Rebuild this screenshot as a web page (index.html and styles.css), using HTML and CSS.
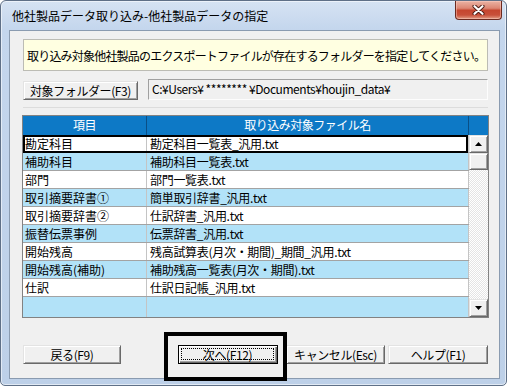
FILE: index.html
```html
<!DOCTYPE html>
<html lang="ja">
<head>
<meta charset="utf-8">
<title>他社製品データの指定</title>
<link rel="stylesheet" href="styles.css">
</head>
<body>
<div class="window">
  <div class="titlebar">
    <span class="title">他社製品データ取り込み-他社製品データの指定</span>
    <div class="close">
      <svg width="13" height="10" viewBox="0 0 13 10"><path d="M2.5 1.2 L10.5 8.8 M10.5 1.2 L2.5 8.8" stroke="#4a1a12" stroke-width="4" stroke-linecap="round"/><path d="M2.5 1.2 L10.5 8.8 M10.5 1.2 L2.5 8.8" stroke="#fff" stroke-width="2.2" stroke-linecap="round"/></svg>
    </div>
  </div>
  <div class="client">
    <div class="message">取り込み対象他社製品のエクスポートファイルが存在するフォルダーを指定してください。</div>
    <div class="folder-row">
      <button class="btn folder-btn">対象フォルダー(F3)</button>
      <div class="path">C:¥Users¥ ******** ¥Documents¥houjin_data¥</div>
    </div>
    <div class="sep"></div>
    <div class="grid">
      <div class="grid-head">
        <div class="hcell h1">項目</div>
        <div class="hcell h2">取り込み対象ファイル名</div>
        <div class="hcell h3"></div>
      </div>
      <div class="grid-body">
        <div class="rows">
          <div class="row sel"><div class="c1">勘定科目</div><div class="c2">勘定科目一覧表_汎用.txt</div></div>
          <div class="row alt"><div class="c1">補助科目</div><div class="c2">補助科目一覧表.txt</div></div>
          <div class="row"><div class="c1">部門</div><div class="c2">部門一覧表.txt</div></div>
          <div class="row alt"><div class="c1">取引摘要辞書①</div><div class="c2">簡単取引辞書_汎用.txt</div></div>
          <div class="row"><div class="c1">取引摘要辞書②</div><div class="c2">仕訳辞書_汎用.txt</div></div>
          <div class="row alt"><div class="c1">振替伝票事例</div><div class="c2">伝票辞書_汎用.txt</div></div>
          <div class="row"><div class="c1">開始残高</div><div class="c2">残高試算表(月次・期間)_期間_汎用.txt</div></div>
          <div class="row alt"><div class="c1">開始残高(補助)</div><div class="c2">補助残高一覧表(月次・期間).txt</div></div>
          <div class="row"><div class="c1">仕訳</div><div class="c2">仕訳日記帳_汎用.txt</div></div>
          <div class="row alt last"><div class="c1"></div><div class="c2"></div></div>
        </div>
        <div class="scrollbar">
          <div class="sb-btn"><svg width="7" height="4" viewBox="0 0 7 4"><path d="M3.5 0 L7 4 L0 4Z" fill="#000"/></svg></div>
          <div class="sb-thumb"></div>
          <div class="sb-track"></div>
          <div class="sb-btn"><svg width="7" height="4" viewBox="0 0 7 4"><path d="M0 0 L7 0 L3.5 4Z" fill="#000"/></svg></div>
        </div>
      </div>
    </div>
    <div class="buttons">
      <button class="btn back">戻る(F9)</button>
      <button class="btn next"><span class="focus">次へ(F12)</span></button>
      <button class="btn cancel">キャンセル(Esc)</button>
      <button class="btn help">ヘルプ(F1)</button>
    </div>
  </div>
  <div class="highlight"></div>
</div>
</body>
</html>
```

FILE: styles.css
```css
* { box-sizing: border-box; }

body {
  margin: 0;
  background: #fff;
  font-family: "Noto Sans CJK JP", "Noto Sans", sans-serif;
  font-size: 12px;
  color: #000;
}

.window {
  position: relative;
  width: 507px;
  height: 386px;
  border: 1px solid #5f7087;
  border-radius: 6px 6px 5px 5px;
  background: linear-gradient(#d6e3f3, #c4d6ed 28px, #bdd0e8);
  box-shadow: inset 0 0 0 1px rgba(255, 255, 255, 0.55);
  padding: 0 6px 6px 8px;
  display: flex;
  flex-direction: column;
}

.titlebar {
  height: 29px;
  display: flex;
  justify-content: space-between;
  align-items: flex-start;
}

.title {
  padding: 7px 0 0 3px;
  font-size: 12px;
  line-height: 16px;
  color: #000;
}

.close {
  width: 47px;
  height: 19px;
  margin-right: -2px;
  border: 1px solid #6b2a20;
  border-top: none;
  border-radius: 0 0 4px 4px;
  background: linear-gradient(#eab3a4 0%, #dc8673 40%, #c5462f 52%, #c8503a 78%, #e29d85 100%);
  box-shadow: inset 0 0 0 1px rgba(255, 210, 200, 0.45);
  display: flex;
  align-items: center;
  justify-content: center;
}

.client {
  flex: 1;
  background: #f0f0f0;
  border: 1px solid #8a9bb0;
  padding: 8px 11px 0 13px;
  display: flex;
  flex-direction: column;
}

.message {
  height: 32px;
  background: #ffffe1;
  border: 1px solid #bcbcb4;
  padding-left: 3px;
  display: flex;
  align-items: center;
  letter-spacing: -0.8px;
  white-space: nowrap;
}

.folder-row {
  display: flex;
  align-items: flex-end;
  height: 21px;
  margin-top: 8px;
}

.btn {
  font: inherit;
  color: #000;
  background: #f0f0f0;
  border: 1px solid;
  border-color: #e3e3e3 #696969 #696969 #e3e3e3;
  box-shadow: inset 1px 1px #fff, inset -1px -1px #a0a0a0;
  padding: 0;
  height: 19px;
  line-height: 16px;
  letter-spacing: -0.4px;
  white-space: nowrap;
}

.folder-btn { width: 115px; }

.path {
  flex: 1;
  margin-left: 10px;
  height: 21px;
  border: 1px solid;
  border-color: #a0a0a0 #fdfdfd #fdfdfd #a0a0a0;
  background: #f0f0f0;
  padding-left: 3px;
  line-height: 18px;
  letter-spacing: -0.45px;
  white-space: nowrap;
}

.sep {
  height: 1px;
  background: #dcdcdc;
  margin-top: 7px;
}

.grid {
  margin: 7px -1px 0;
  border: 1px solid #828282;
  background: #fff;
}

.grid-head {
  display: flex;
  height: 19px;
  background: #0d79c6;
  color: #fff;
}

.hcell {
  line-height: 18px;
  text-align: center;
  letter-spacing: -0.5px;
}

.h1 { width: 124px; border-right: 1px solid #0a4f86; }
.h2 { width: 322px; border-right: 1px solid #0a4f86; }
.h3 { flex: 1; }

.grid-body {
  display: flex;
  height: 182px;
}

.rows {
  width: 446px;
  display: flex;
  flex-direction: column;
}

.row {
  display: flex;
  height: 18px;
  border-bottom: 1px solid #a3a3a3;
  background: #fff;
  white-space: nowrap;
}

.row.alt { background: #b2e2f8; }

.row.last {
  flex: 1;
  border-bottom: none;
}

.row.sel { position: relative; }

.row.sel::after {
  content: "";
  position: absolute;
  top: 0;
  left: 0;
  right: 1px;
  bottom: -1px;
  border: 2px solid #000;
}

.c1 {
  width: 124px;
  border-right: 1px solid #c4c4c4;
  padding-left: 2px;
  line-height: 17px;
}

.c2 {
  width: 322px;
  border-right: 1px solid #c4c4c4;
  padding-left: 3px;
  line-height: 17px;
  letter-spacing: -0.3px;
}

.scrollbar {
  flex: 1;
  display: flex;
  flex-direction: column;
}

.sb-btn, .sb-thumb {
  height: 18px;
  background: #f0f0f0;
  border: 1px solid;
  border-color: #e3e3e3 #696969 #696969 #e3e3e3;
  box-shadow: inset 1px 1px #fff, inset -1px -1px #a0a0a0;
  display: flex;
  align-items: center;
  justify-content: center;
}

.sb-thumb { height: 17px; }

.sb-track {
  flex: 1;
  background: repeating-conic-gradient(#ffffff 0 25%, #e4e4e4 0 50%) 0 0 / 2px 2px;
}

.buttons {
  display: flex;
  margin-top: 27px;
}

.back { width: 98px; }

.next {
  width: 100px;
  margin-left: auto;
  border-color: #000;
  box-shadow: inset 1px 1px #fff, inset -1px -1px #696969, inset -2px -2px #a0a0a0;
  padding: 2px 3px 3px 2px;
  display: flex;
}

.focus {
  flex: 1;
  border: 1px dotted #000;
  line-height: 11px;
}

.cancel { width: 99px; margin-left: 8px; }
.help { width: 100px; margin-left: 3px; }

.highlight {
  position: absolute;
  left: 163px;
  top: 331px;
  width: 123px;
  height: 49px;
  border: 4px solid #000;
}
```
